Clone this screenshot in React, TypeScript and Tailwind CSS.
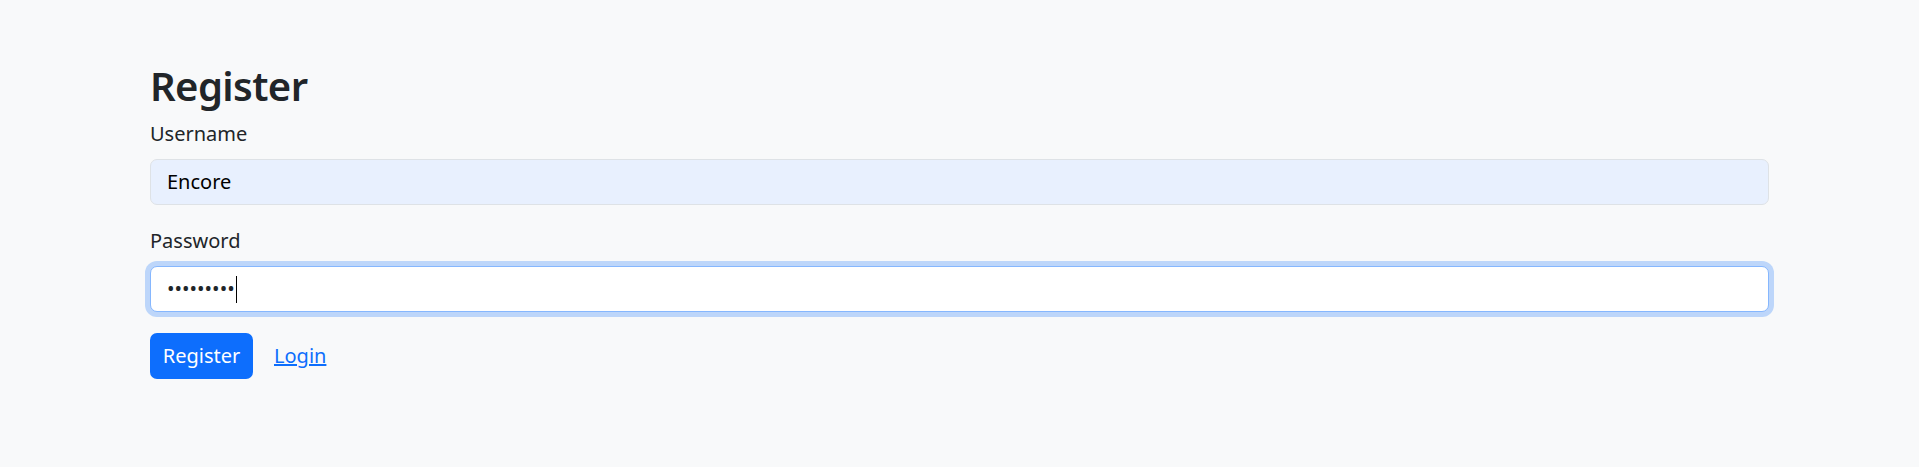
export default function App() {
  return (
    <div className="min-h-[467px] w-full bg-[#f8f9fa] text-[#212529] [font-family:'Noto_Sans','Open_Sans',sans-serif]">
      <div className="px-[150px] pt-[62px]">
        <h2 className="text-[40px] leading-[48px] font-semibold tracking-[-0.6px] mb-[8px]">Register</h2>
        <form onSubmit={(e) => e.preventDefault()}>
          <div className="mb-[21px]">
            <label className="block text-[20px] leading-[30px] mb-[10px] pt-[1px] -mb-[1px]">Username</label>
            <div className="h-[46px] w-full rounded-[7px] border border-[#dee2e6] bg-[#e8f0fe] px-[16px] flex items-center text-[20px] text-black">
              Encore
            </div>
          </div>
          <div className="mb-[21px]">
            <label className="block text-[20px] leading-[30px] mb-[10px]">Password</label>
            <div className="h-[46px] w-full rounded-[7px] border border-[#86b7fe] bg-white px-[16px] flex items-center text-[20px] text-[#212529] shadow-[0_0_0_5px_rgba(13,110,253,0.25)]">
              <span>•••••••••</span>
              <span className="ml-[1px] inline-block h-[27px] w-[1px] bg-black" />
            </div>
          </div>
          <div className="flex items-center gap-[21px]">
            <button
              type="submit"
              className="h-[46px] w-[103px] rounded-[7px] bg-[#0d6efd] text-white text-[20px] leading-[30px] flex items-center justify-center"
            >
              Register
            </button>
            <a href="#" className="text-[20px] leading-[30px] text-[#0d6efd] underline">
              Login
            </a>
          </div>
        </form>
      </div>
    </div>
  );
}
